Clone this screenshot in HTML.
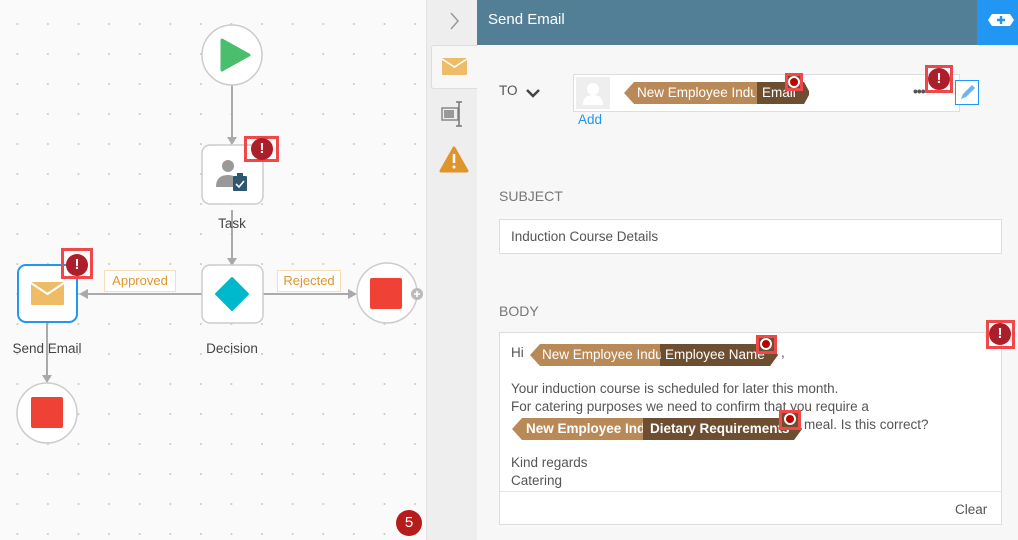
<!DOCTYPE html>
<html><head><meta charset="utf-8"><style>
*{box-sizing:border-box;margin:0;padding:0}
body{width:1018px;height:540px;overflow:hidden;font-family:"Liberation Sans",sans-serif;position:relative;background:#f7f7f7}
.abs{position:absolute}
.canvas{left:0;top:0;width:426px;height:540px;background-color:#fafafa;background-image:radial-gradient(circle,#ccc 0.8px,transparent 1.2px);background-size:30.6px 30px;background-position:2px 9px}
.side{left:426px;top:0;width:51px;height:540px;background:#eeeeee;border-left:1px solid #e2e2e2}
.lbl{font-size:13.5px;color:#444;text-align:center}
.err{width:34px;height:26px;border:3px solid #f04848}
.dot{width:22px;height:22px;border-radius:50%;background:#ab1e2a;color:#fff;font-weight:bold;font-size:15px;text-align:center;line-height:22px}
.tok{height:22px;font-size:13.5px;color:#fff;line-height:22px}
.t{font-size:13.5px;color:#555}
</style></head><body>
<div class="abs canvas"></div>
<svg class="abs" style="left:0;top:0" width="426" height="540">
<g stroke="#aaa" stroke-width="2" fill="#aaa">
<line x1="232" y1="85" x2="232" y2="140"/>
<line x1="232" y1="210" x2="232" y2="262"/>
<line x1="202" y1="294" x2="85" y2="294"/>
<line x1="263" y1="294" x2="350" y2="294"/>
<line x1="47" y1="323" x2="47" y2="378"/>
<polygon points="227,137 237,137 232,145" stroke="none"/>
<polygon points="227,258 237,258 232,266" stroke="none"/>
<polygon points="88,289 88,299 79,294" stroke="none"/>
<polygon points="348,289 348,299 357,294" stroke="none"/>
<polygon points="42,375 52,375 47,383" stroke="none"/>
</g>
<circle cx="232" cy="55" r="30" fill="#fff" stroke="#ccc" stroke-width="1.5"/>
<polygon points="222,40 249,55 222,70" fill="#4bbe6e" stroke="#4bbe6e" stroke-width="3" stroke-linejoin="round"/>
<rect x="202" y="145" width="61" height="59" rx="8" fill="#fff" stroke="#ccc" stroke-width="1.5"/>
<circle cx="228" cy="166" r="6" fill="#999"/><path d="M216 187 q0-12 12-12 q8 0 10 6 v6z" fill="#999"/>
<rect x="233" y="176" width="14" height="15" rx="1" fill="#2e5771"/><rect x="237" y="173" width="6" height="4" fill="#2e5771"/>
<path d="M236 184 l3 3 l5-6" stroke="#fff" stroke-width="1.6" fill="none"/>
<rect x="202" y="265" width="61" height="58" rx="8" fill="#fff" stroke="#ccc" stroke-width="1.5"/>
<polygon points="232,278 248,294 232,310 216,294" fill="#00b8cc" stroke="#00b8cc" stroke-width="2" stroke-linejoin="round"/>
<rect x="18" y="265" width="59" height="57" rx="8" fill="#fff" stroke="#2196f3" stroke-width="2"/>
<rect x="31" y="282" width="33" height="23" rx="1" fill="#eebb66"/>
<path d="M31 283 l16.5 11 l16.5-11" stroke="#fff" stroke-width="2" fill="none"/>
<circle cx="387" cy="293" r="30" fill="#fff" stroke="#ccc" stroke-width="1.5"/>
<rect x="370" y="278" width="32" height="31" rx="2" fill="#ef4136"/>
<circle cx="417" cy="294" r="6" fill="#bbb"/><path d="M414 294h6M417 291v6" stroke="#fff" stroke-width="1.6"/>
<circle cx="47" cy="413" r="30" fill="#fff" stroke="#ccc" stroke-width="1.5"/>
<rect x="31" y="397" width="32" height="31" rx="2" fill="#ef4136"/>
</svg>
<div class="abs err" style="left:244px;top:136px;width:35px"></div><div class="abs dot" style="left:251px;top:138px">!</div>
<div class="abs err" style="left:61px;top:248px;width:32px;height:31px"></div><div class="abs dot" style="left:66px;top:254px">!</div>
<div class="abs lbl" style="left:192px;top:216px;width:80px">Task</div>
<div class="abs lbl" style="left:192px;top:341px;width:80px">Decision</div>
<div class="abs lbl" style="left:2px;top:341px;width:90px">Send Email</div>
<div class="abs" style="left:104px;top:270px;width:72px;height:22px;border:1px solid #f8dfb6;background:#fff;color:#e0952c;font-size:13px;text-align:center;line-height:20px">Approved</div>
<div class="abs" style="left:277px;top:270px;width:64px;height:22px;border:1px solid #f8dfb6;background:#fff;color:#e0952c;font-size:13px;text-align:center;line-height:20px">Rejected</div>
<div class="abs" style="left:396px;top:510px;width:26px;height:26px;border-radius:50%;background:#b71c1c;color:#fff;font-size:15px;text-align:center;line-height:26px">5</div>
<div class="abs side"></div>
<svg class="abs" style="left:426px;top:0" width="51" height="200">
<path d="M25 13 l7 8 l-7 8" stroke="#999" stroke-width="1.5" fill="none"/>
</svg>
<div class="abs" style="left:431px;top:45px;width:46px;height:44px;background:#f7f7f7;border:1px solid #ddd;border-right:none;border-radius:3px 0 0 3px"></div>
<svg class="abs" style="left:426px;top:45px" width="51" height="140">
<rect x="16" y="13" width="25" height="17" rx="1" fill="#eebb66"/><path d="M16 14 l12.5 8 l12.5-8" stroke="#fff" stroke-width="1.6" fill="none"/>
<rect x="16" y="63" width="16" height="12" fill="none" stroke="#888" stroke-width="1.5"/><rect x="18" y="65" width="10" height="8" fill="#999"/>
<path d="M33 57v24M30 57h6M30 81h6" stroke="#777" stroke-width="1.5"/>
<polygon points="28,103 41,126 15,126" fill="#e0952c" stroke="#e0952c" stroke-width="3" stroke-linejoin="round"/>
<path d="M28 109v9" stroke="#fff" stroke-width="2.5"/><circle cx="28" cy="122" r="1.5" fill="#fff"/>
</svg>
<div class="abs" style="left:477px;top:0;width:541px;height:45px;background:#537f96"></div>
<div class="abs" style="left:488px;top:11px;color:#fff;font-size:15px">Send Email</div>
<div class="abs" style="left:977px;top:0;width:41px;height:45px;background:#2196f3"></div>
<svg class="abs" style="left:977px;top:0" width="41" height="45"><polygon points="15,14 33,14 37,20 33,26 15,26 11,20" fill="#fff"/><path d="M24 16v8M20 20h8" stroke="#2196f3" stroke-width="2.4"/></svg>
<div class="abs t" style="left:499px;top:83px">TO</div>
<svg class="abs" style="left:524px;top:86px" width="18" height="14"><path d="M3 4 l6 6 l6-6" stroke="#444" stroke-width="2.5" fill="none"/></svg>
<div class="abs" style="left:573px;top:74px;width:387px;height:38px;background:#fff;border:1px solid #ddd"></div>
<div class="abs" style="left:576px;top:77px;width:34px;height:32px;background:#eee"></div>
<svg class="abs" style="left:576px;top:77px" width="34" height="32"><circle cx="17" cy="12" r="6" fill="#fff"/><path d="M7 28 q0-10 10-10 q10 0 10 10z" fill="#fff"/></svg>
<svg class="abs" style="left:624px;top:82px" width="185" height="22"><polygon points="0,11 10,0 180,0 186,11 180,22 10,22" fill="#b98a57"/><rect x="133" y="0" width="40" height="22" fill="#6e4e30"/><polygon points="173,0 180,0 186,11 180,22 173,22" fill="#6e4e30"/></svg>
<div class="abs tok" style="left:637px;top:82px;width:118px;overflow:hidden;white-space:nowrap">New Employee Induction</div>
<div class="abs tok" style="left:762px;top:82px">Email</div>
<div class="abs" style="left:785px;top:73px;width:18px;height:18px;border:3px solid #f04848;background:#6e4e30"></div><div class="abs" style="left:790px;top:78px;width:8px;height:8px;border-radius:50%;background:#b00;outline:2px solid #fff"></div>
<div class="abs" style="left:913px;top:83px;color:#555;font-size:14px;font-weight:bold;letter-spacing:-1px">•••</div>
<div class="abs err" style="left:925px;top:65px;width:28px;height:28px"></div><div class="abs dot" style="left:928px;top:68px">!</div>
<div class="abs" style="left:955px;top:80px;width:24px;height:25px;border:1px solid #2196f3;background:#fff"></div>
<svg class="abs" style="left:955px;top:80px" width="24" height="25"><path d="M6 19 l2-5 l9-9 l3 3 l-9 9z" fill="#6ab4f0"/></svg>
<div class="abs" style="left:578px;top:112px;color:#2196f3;font-size:13.5px">Add</div>
<div class="abs" style="left:499px;top:188px;color:#777;font-size:14px">SUBJECT</div>
<div class="abs" style="left:499px;top:219px;width:503px;height:35px;background:#fff;border:1px solid #ddd"></div>
<div class="abs t" style="left:511px;top:229px">Induction Course Details</div>
<div class="abs" style="left:499px;top:303px;color:#777;font-size:14px">BODY</div>
<div class="abs" style="left:499px;top:332px;width:503px;height:193px;background:#fff;border:1px solid #ddd"></div>
<div class="abs" style="left:500px;top:491px;width:501px;height:1px;background:#e5e5e5"></div>
<div class="abs t" style="left:955px;top:502px">Clear</div>
<div class="abs err" style="left:986px;top:320px;width:29px;height:29px"></div><div class="abs dot" style="left:989px;top:323px">!</div>
<div class="abs t" style="left:511px;top:345px">Hi</div>
<svg class="abs" style="left:530px;top:344px" width="255" height="22"><polygon points="0,11 10,0 240,0 248,11 240,22 10,22" fill="#b98a57"/><rect x="130" y="0" width="110" height="22" fill="#6e4e30"/><polygon points="238,0 240,0 248,11 240,22 238,22" fill="#6e4e30"/></svg>
<div class="abs tok" style="left:542px;top:344px;width:119px;overflow:hidden;white-space:nowrap">New Employee Induction</div>
<div class="abs tok" style="left:665px;top:344px">Employee Name</div>
<div class="abs t" style="left:781px;top:345px">,</div>
<div class="abs" style="left:756px;top:335px;width:21px;height:19px;border:3px solid #f04848;background:#6e4e30"></div><div class="abs" style="left:762px;top:340px;width:8px;height:8px;border-radius:50%;background:#b00;outline:2px solid #fff"></div>
<div class="abs t" style="left:511px;top:381px">Your induction course is scheduled for later this month.</div>
<div class="abs t" style="left:511px;top:399px">For catering purposes we need to confirm that you require a</div>
<svg class="abs" style="left:512px;top:418px" width="295" height="22"><polygon points="0,11 10,0 282,0 290,11 282,22 10,22" fill="#b98a57"/><rect x="131" y="0" width="151" height="22" fill="#6e4e30"/><polygon points="280,0 282,0 290,11 282,22 280,22" fill="#6e4e30"/></svg>
<div class="abs tok" style="left:526px;top:418px;width:117px;overflow:hidden;white-space:nowrap;font-weight:bold">New Employee Induction</div>
<div class="abs tok" style="left:650px;top:418px;font-weight:bold">Dietary Requirements</div>
<div class="abs" style="left:779px;top:410px;width:22px;height:20px;border:3px solid #f04848;background:#6e4e30"></div><div class="abs" style="left:786px;top:415px;width:8px;height:8px;border-radius:50%;background:#b00;outline:2px solid #fff"></div>
<div class="abs t" style="left:804px;top:417px">meal. Is this correct?</div>
<div class="abs t" style="left:511px;top:455px">Kind regards</div>
<div class="abs t" style="left:511px;top:473px">Catering</div>
</body></html>
